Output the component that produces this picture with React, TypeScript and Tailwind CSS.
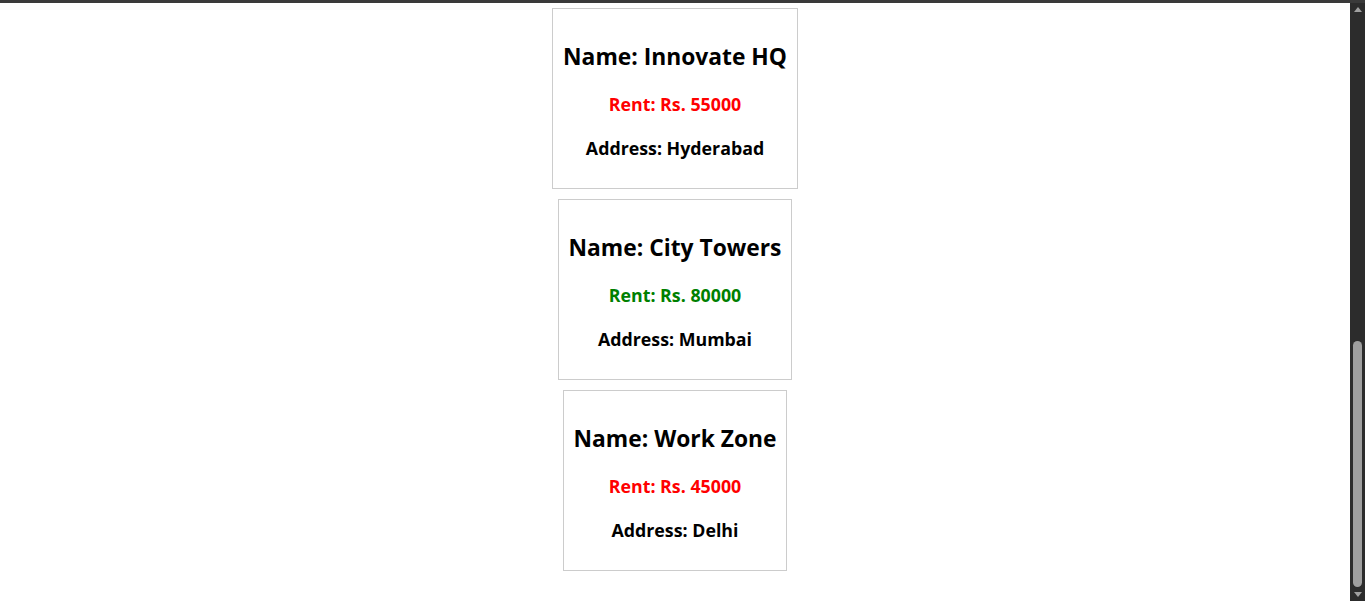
import React from "react";

type Space = { name: string; rent: number; address: string };

const spaces: Space[] = [
  { name: "Innovate HQ", rent: 55000, address: "Hyderabad" },
  { name: "City Towers", rent: 80000, address: "Mumbai" },
  { name: "Work Zone", rent: 45000, address: "Delhi" },
];

function SpaceCard({ space }: { space: Space }) {
  // rent above 60000 shows in green, the rest in red
  const rentColor = space.rent > 60000 ? "text-[#008000]" : "text-[#ff0000]";
  return (
    <div className="border border-[#cccccc] px-[10px] py-[10px] text-center">
      <h2 className="mt-[22px] mb-[19px] text-[22.8px] leading-[32px] font-bold text-black">Name: {space.name}</h2>
      <h3 className={`mb-[19px] text-[17.8px] leading-[25px] font-bold ${rentColor}`}>Rent: Rs. {space.rent}</h3>
      <h3 className="mb-[17px] text-[17.8px] leading-[25px] font-bold text-black">Address: {space.address}</h3>
    </div>
  );
}

export default function App() {
  return (
    <div className="h-[601px] flex flex-col bg-white overflow-hidden" style={{ fontFamily: '"Open Sans", "Noto Sans", sans-serif' }}>
      <div className="h-[3px] bg-[#3a3a3a] shrink-0" />
      <div className="flex flex-1 min-h-0">
        <main className="flex-1 flex flex-col items-center gap-[10px] pt-[5px]">
          {spaces.map((s) => (
            <SpaceCard key={s.name} space={s} />
          ))}
        </main>

        {/* browser scrollbar */}
        <div className="w-[15px] bg-[#2c2c2c] flex flex-col items-center py-[4px]">
          <span className="w-0 h-0 border-x-[4px] border-x-transparent border-b-[5px] border-b-[#a0a0a0]" />
          <div className="flex-1 w-full flex flex-col justify-end items-center pb-[5px]">
            <div className="w-[9px] h-[246px] rounded-full bg-[#9f9f9f]" />
          </div>
          <span className="w-0 h-0 border-x-[4px] border-x-transparent border-t-[5px] border-t-[#a0a0a0]" />
        </div>
      </div>
    </div>
  );
}
